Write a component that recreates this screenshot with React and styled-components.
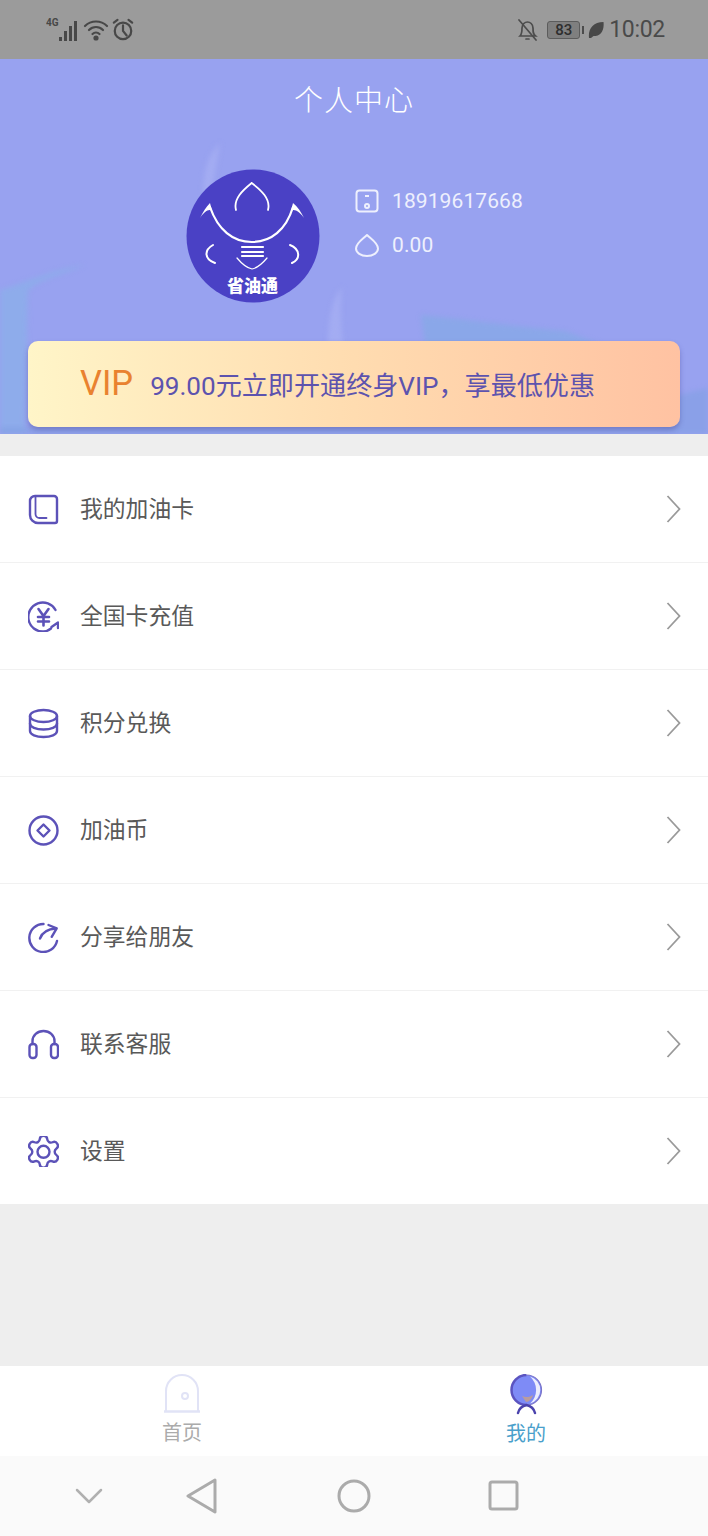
import React from 'react'
import styled, { createGlobalStyle } from 'styled-components'

const GlobalStyle = createGlobalStyle`
  html, body {
    margin: 0;
    padding: 0;
    background: #eeeeee;
    font-family: "Roboto", "Noto Sans CJK SC", sans-serif;
  }
`
const Page = styled.div`
  width: 708px;
  height: 1536px;
  display: flex;
  flex-direction: column;
  overflow: hidden;
  background: #eeeeee;
`
const StatusBar = styled.div`
  height: 59px;
  flex: none;
  background: #9b9b9b;
  display: flex;
  align-items: center;
  justify-content: space-between;
  padding: 0 43px 0 46px;
  color: #4c4c4c;
`
const StatusGroup = styled.div`
  display: flex;
  align-items: center;
  gap: ${p => p.$gap || 3}px;
`
const BatteryGroup = styled.div`
  display: flex;
  align-items: center;
  gap: 2px;
  margin-right: -3px;
`
const Clock = styled.span`
  font-size: 23px;
  font-weight: 400;
  letter-spacing: -0.3px;
  color: #4a4a4a;
  margin-left: -2px;
`
const Battery = styled.span`
  width: 33px;
  height: 18px;
  box-sizing: border-box;
  border: 1px solid #5c5c5c;
  border-radius: 3px;
  background: #7f7f7f;
  font-size: 15px;
  font-weight: 500;
  line-height: 16px;
  text-align: center;
  color: #2e2e2e;
`
const BatteryTip = styled.span`
  width: 2px;
  height: 8px;
  background: #4c4c4c;
`
const Hero = styled.div`
  position: relative;
  height: 375px;
  flex: none;
  background: #98a2f0;
  display: flex;
  flex-direction: column;
  align-items: center;
  overflow: hidden;
`
const HeroShapes = styled.svg`
  position: absolute;
  inset: 0;
  filter: blur(2.5px);
`
const HeroTitle = styled.h1`
  position: relative;
  margin: 19px 0 0;
  font-family: "Noto Sans CJK SC", sans-serif;
  font-size: 29px;
  line-height: 40px;
  font-weight: 300;
  letter-spacing: 1px;
  color: #fff;
`
const Profile = styled.div`
  position: relative;
  margin-top: 51px;
  width: 336px;
  display: flex;
  align-items: center;
  gap: 35px;
`
const Avatar = styled.svg`
  width: 134px;
  height: 134px;
  flex: none;
`
const Facts = styled.div`
  display: flex;
  flex-direction: column;
  gap: 16px;
  margin-top: -26px;
`
const Fact = styled.div`
  display: flex;
  align-items: center;
  gap: 13px;
  height: 28px;
  font-size: 21px;
  font-weight: 400;
  letter-spacing: 0.1px;
  color: #eef0fd;
`
const VipBanner = styled.div`
  position: relative;
  margin-top: 38px;
  width: 652px;
  height: 86px;
  box-sizing: border-box;
  padding-left: 52px;
  border-radius: 10px;
  background: linear-gradient(90deg, #fff5c8 0%, #ffdcb0 50%, #ffc2a2 100%);
  box-shadow: 0 3px 5px rgba(70, 70, 150, 0.4);
  display: flex;
  align-items: center;
  gap: 17px;
`
const VipMark = styled.span`
  margin-top: -2px;
  font-size: 34.5px;
  font-weight: 400;
  color: #e9822f;
`
const VipText = styled.span`
  font-family: "Roboto", "Noto Sans CJK SC", sans-serif;
  font-size: 26.1px;
  font-weight: 400;
  color: #5d53ae;
`
const Menu = styled.div`
  margin-top: 22px;
  background: #fff;
  flex: none;
`
const Row = styled.div`
  height: 106px;
  display: flex;
  align-items: center;
  padding: 0 27px 0 28px;
  gap: 21px;
  border-top: ${p => (p.$first ? 'none' : '1px solid #f1f1f1')};
`
const RowIcon = styled.svg`
  width: 31px;
  height: 31px;
  flex: none;
  fill: none;
  stroke: #5c52b8;
  stroke-width: 2.4;
  stroke-linecap: round;
  stroke-linejoin: round;
`
const RowLabel = styled.span`
  flex: 1;
  padding-bottom: 4px;
  font-family: "Noto Sans CJK SC", sans-serif;
  font-size: 22.8px;
  font-weight: 400;
  color: #595959;
`
const Chevron = styled.svg`
  width: 15px;
  height: 28px;
  flex: none;
  fill: none;
  stroke: #9a9a9a;
  stroke-width: 1.8;
`
const Filler = styled.div`
  flex: 1;
`
const TabBar = styled.div`
  height: 90px;
  flex: none;
  background: #fff;
  display: flex;
  justify-content: space-between;
  padding: 0 161px;
`
const Tab = styled.div`
  width: 42px;
  display: flex;
  flex-direction: column;
  align-items: center;
  padding-top: 8px;
`
const TabIcon = styled.svg`
  width: 42px;
  height: 42px;
  flex: none;
`
const TabLabel = styled.span`
  margin-top: ${p => (p.$active ? 2 : 1)}px;
  font-family: "Noto Sans CJK SC", sans-serif;
  font-size: 20px;
  line-height: 30px;
  white-space: nowrap;
  color: ${p => (p.$active ? '#4a9fcb' : '#ababab')};
`
const NavBar = styled.div`
  height: 80px;
  flex: none;
  background: #fafafa;
  display: flex;
  align-items: center;
  padding-left: 75px;
`
const NavIcon = styled.svg`
  flex: none;
  margin-right: ${p => p.$gap || 0}px;
  fill: none;
  stroke: ${p => p.$color || '#ababab'};
  stroke-width: 3;
  stroke-linejoin: round;
  stroke-linecap: round;
`

const icons = {
  card: (
    <>
      <path d="M7 2h19a3 3 0 0 1 3 3v22a2 2 0 0 1-2 2H10a8 8 0 0 1-8-8V7a5 5 0 0 1 5-5z" />
      <path d="M7.500 3v17a4 4 0 0 0 4 4h7" strokeWidth="1.800" />
    </>
  ),
  yuan: (
    <>
      <path d="M27.500 9A14.500 14.500 0 1 0 15.500 30.500C18 30.500 20.500 29.500 23 27.500" />
      <path d="M23.500 26l6.500-4.500v5.500" />
      <path d="M10.500 8l5 7 5-7M10 16h11M10 20.500h11M15.500 15v9.500" strokeWidth="2.600" />
    </>
  ),
  coins: (
    <>
      <ellipse cx="15.500" cy="8" rx="13.500" ry="6" />
      <path d="M2 8v15c0 3.500 6 6 13.500 6S29 26.500 29 23V8" />
      <path d="M2 15.500c0 3.500 6 6 13.500 6s13.500-2.500 13.500-6" />
    </>
  ),
  coin: (
    <>
      <circle cx="15.500" cy="15.500" r="14" />
      <path d="M15.500 9.500l6 6-6 6-6-6z" />
    </>
  ),
  share: (
    <>
      <path d="M15.500 2A14 14 0 1 0 29 19" />
      <path d="M12 16.500C14 11 19 7 28 6.500" />
      <path d="M20.500 3l8.200 3.300-5 8.500" />
    </>
  ),
  headset: (
    <>
      <path d="M4.500 15v-3a11 10 0 0 1 22 0v3" />
      <rect x="1.500" y="15" width="7" height="14" rx="3" />
      <rect x="23" y="15" width="7" height="14" rx="3" />
    </>
  ),
  gear: (
    <>
      <g transform="translate(-3.700 -3.400) scale(1.600)" strokeWidth="1.500">
        <path d="M9.671 4.136a2.34 2.34 0 0 1 4.659 0 2.34 2.34 0 0 0 3.319 1.915 2.34 2.34 0 0 1 2.33 4.033 2.34 2.34 0 0 0 0 3.831 2.34 2.34 0 0 1-2.33 4.033 2.34 2.34 0 0 0-3.319 1.915 2.34 2.34 0 0 1-4.659 0 2.34 2.34 0 0 0-3.32-1.915 2.34 2.34 0 0 1-2.33-4.033 2.34 2.34 0 0 0 0-3.831A2.34 2.34 0 0 1 6.35 6.051a2.34 2.34 0 0 0 3.319-1.915" />
      </g>
      <circle cx="15.500" cy="15.800" r="6" />
    </>
  ),
}

const rows = [
  { icon: 'card', label: '我的加油卡' },
  { icon: 'yuan', label: '全国卡充值' },
  { icon: 'coins', label: '积分兑换' },
  { icon: 'coin', label: '加油币' },
  { icon: 'share', label: '分享给朋友' },
  { icon: 'headset', label: '联系客服' },
  { icon: 'gear', label: '设置' },
]

const SignalIcon = () => (
  <svg width="34" height="28" viewBox="0 0 34 28" fill="#484848">
    <text x="0" y="10" fontSize="10" fontWeight="700" fontFamily="Roboto, sans-serif">4G</text>
    <rect x="13" y="21" width="3" height="4" />
    <rect x="18" y="15" width="3" height="10" />
    <rect x="23" y="10" width="3" height="15" />
    <rect x="28" y="5" width="3" height="20" />
  </svg>
)

const WifiIcon = () => (
  <svg width="26" height="24" viewBox="0 0 26 24" fill="none" stroke="#484848" strokeWidth="2.200" strokeLinecap="round">
    <path d="M2 8c6-6 16-6 22 0" />
    <path d="M6 12c4-4 10-4 14 0" />
    <path d="M9.500 16c2-2 5-2 7 0" />
    <circle cx="13" cy="20" r="1.500" fill="#484848" />
  </svg>
)

const AlarmIcon = () => (
  <svg width="22" height="24" viewBox="0 0 24 26" fill="none" stroke="#484848" strokeWidth="2.400" strokeLinecap="round">
    <circle cx="12" cy="14" r="9" />
    <path d="M12 8v6l4 5M2 5l4-3M22 5l-4-3" />
  </svg>
)

const MuteIcon = () => (
  <svg width="22" height="24" viewBox="0 0 22 24" fill="none" stroke="#4c4c4c" strokeWidth="1.700" strokeLinecap="round">
    <path d="M2 18c2-2 2-4 2-8 0-4 3-6 5.500-6S15 6 15 10c0 4 0 6 2.500 8z" />
    <path d="M8 21h3M1 2l17 20" />
  </svg>
)

const LeafIcon = () => (
  <svg width="16" height="18" viewBox="0 0 16 18">
    <path d="M1 17C0 8 5 1 15.500 1c1 9-3 14-10 14L3 17z" fill="#484848" />
  </svg>
)

const App = () => (
  <Page>
    <GlobalStyle />
    <StatusBar>
      <StatusGroup>
        <SignalIcon />
        <WifiIcon />
        <AlarmIcon />
      </StatusGroup>
      <StatusGroup $gap={7}>
        <MuteIcon />
        <BatteryGroup>
          <Battery>83</Battery>
          <BatteryTip />
        </BatteryGroup>
        <LeafIcon />
        <Clock>10:02</Clock>
      </StatusGroup>
    </StatusBar>

    <Hero>
      <HeroShapes width="708" height="375" viewBox="0 0 708 375">
        <path d="M-6 233C30 222 55 210 85 206C60 216 36 222 28 232L25 381H-6z" fill="#8bafea" opacity="0.75" />
        <path d="M421 256C480 262 520 268 565 272L600 285H425z" fill="#85aae6" opacity="0.7" />
        <path d="M-6 381H714V328L670 338L660 368H-6z" fill="#829fe4" opacity="0.65" />
        <path d="M220 84C208 96 204 110 203 130L206 150L214 120z" fill="#a3acf2" />
        <path d="M342 228C332 240 328 260 328 285H343C341 265 340 245 342 228z" fill="#a3acf2" />
      </HeroShapes>
      <HeroTitle>个人中心</HeroTitle>
      <Profile>
        <Avatar viewBox="0 0 134 134">
          <circle cx="67" cy="67" r="66.500" fill="#4a41c5" />
          <g fill="none" stroke="#fff" strokeLinecap="round">
            <path d="M65.700 14C57 21 47 30 50 41M65.700 14C75 21 85 30 82 41" strokeWidth="1.800" />
            <path d="M24 38C32 61 47 73 65.700 73C85 73 100 61 107 38" strokeWidth="2.200" />
            <path d="M27 76C18 81 18 90 29 94M104 76C114 80 115 90 106 94" strokeWidth="2" />
            <path d="M56 78H77M56 83H77M56 87H77" strokeWidth="2.200" />
            <path d="M51 89C56 95 61 99 66 100C71 99 76 95 81 89" strokeWidth="1.200" />
          </g>
          <path d="M14 49C17 43 20 38 24 34L26 42C23 39 18 43 14 49zM118 49C115 43 112 38 107 34L105 42C108 39 114 43 118 49z" fill="#fff" />
          <text x="66.500" y="123" textAnchor="middle" fill="#fff" fontSize="17" fontWeight="900" fontFamily="Noto Sans CJK SC, sans-serif">省油通</text>
        </Avatar>
        <Facts>
          <Fact>
            <svg width="24" height="24" viewBox="0 0 24 24" fill="none" stroke="#eef0fd" strokeWidth="2">
              <rect x="1.500" y="1.500" width="21" height="21" rx="3" />
              <path d="M10 7h4" />
              <circle cx="12" cy="17" r="2" />
            </svg>
            18919617668
          </Fact>
          <Fact>
            <svg width="24" height="24" viewBox="0 0 24 24" fill="none" stroke="#eef0fd" strokeWidth="2" strokeLinejoin="round">
              <path d="M12 2C8 6 1 10 1 15.500a11 7.500 0 0 0 22 0C23 10 16 6 12 2z" />
            </svg>
            0.00
          </Fact>
        </Facts>
      </Profile>
      <VipBanner>
        <VipMark>VIP</VipMark>
        <VipText>99.00元立即开通终身VIP，享最低优惠</VipText>
      </VipBanner>
    </Hero>

    <Menu>
      {rows.map((row, i) => (
        <Row key={row.label} $first={i === 0}>
          <RowIcon viewBox="0 0 31 31">{icons[row.icon]}</RowIcon>
          <RowLabel>{row.label}</RowLabel>
          <Chevron viewBox="0 0 15 28">
            <path d="M1.500 1L13.500 14L1.500 27" />
          </Chevron>
        </Row>
      ))}
    </Menu>
    <Filler />

    <TabBar>
      <Tab>
        <TabIcon viewBox="0 0 42 42">
          <g fill="none" stroke="#e1e3f6" strokeWidth="2">
            <path d="M5 37V17a16 16 0 0 1 32 0v20" />
            <path d="M3 37.500h36" strokeWidth="2.500" />
            <circle cx="24" cy="22" r="3" />
          </g>
        </TabIcon>
        <TabLabel>首页</TabLabel>
      </Tab>
      <Tab>
        <TabIcon viewBox="0 0 42 42">
          <circle cx="21.500" cy="16" r="15" fill="#7e8bf6" />
          <path d="M25 2.500a14 14 0 0 1 0 27a18 18 0 0 0 0-27z" fill="#eceefd" />
          <path d="M17 22c4 2 8 1 11-1c-1 4-4 7-7 7z" fill="#b99c9f" />
          <path d="M21.500 31A15 15 0 0 1 21.500 1" fill="none" stroke="#5b54c0" strokeWidth="2.500" />
          <path d="M21.500 1A15 15 0 0 1 21.500 31" fill="none" stroke="#7a74c8" strokeWidth="1.200" />
          <path d="M13 39c1-4 4-7 8.500-8c4.500 1 7.500 4 8.500 8" fill="none" stroke="#4b43ad" strokeWidth="2.500" strokeLinecap="round" />
        </TabIcon>
        <TabLabel $active>我的</TabLabel>
      </Tab>
    </TabBar>

    <NavBar>
      <NavIcon width="28" height="18" viewBox="0 0 28 18" $gap={83} $color="#b0b0b0">
        <path d="M2 3l12 12L26 3" strokeWidth="2.500" />
      </NavIcon>
      <NavIcon width="32" height="36" viewBox="0 0 32 36" $gap={119}>
        <path d="M29 2L2 18l27 16z" />
      </NavIcon>
      <NavIcon width="34" height="34" viewBox="0 0 34 34" $gap={117}>
        <circle cx="17" cy="17" r="15" />
      </NavIcon>
      <NavIcon width="32" height="32" viewBox="0 0 32 32">
        <rect x="2" y="2" width="27" height="27" rx="2" />
      </NavIcon>
    </NavBar>
  </Page>
)

export default App
